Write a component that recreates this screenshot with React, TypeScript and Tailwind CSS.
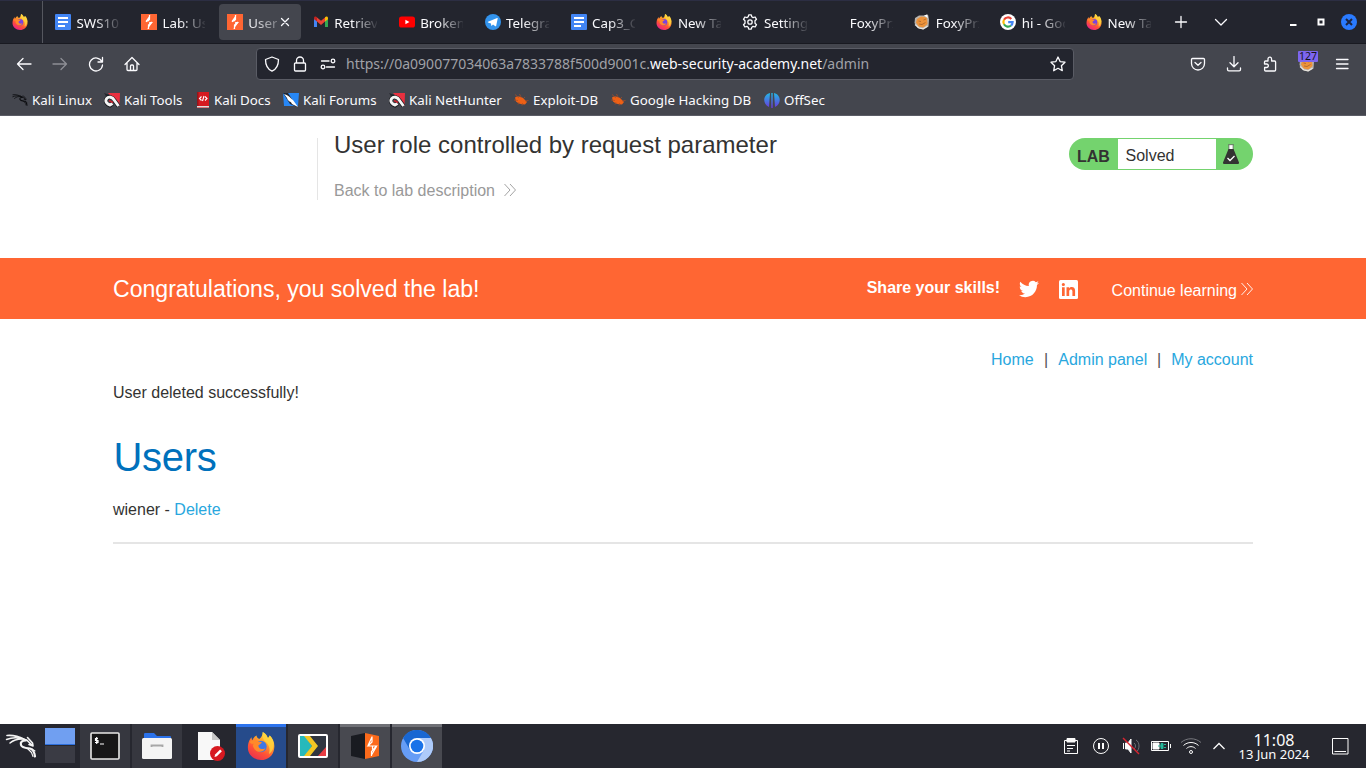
import React from "react";

type IconProps = { className?: string };

const FirefoxLogo = ({ size, id, globe = "#7a42e0", low = "#ea1f8c" }: { size: number; id: string; globe?: string; low?: string }) => (
  <svg width={size} height={size} viewBox="0 0 32 32" className="block shrink-0">
    <defs>
      <linearGradient id={`${id}-a`} x1="0.85" y1="0" x2="0.3" y2="1">
        <stop offset="0" stopColor="#fff44f" />
        <stop offset="0.35" stopColor="#ffa62b" />
        <stop offset="0.7" stopColor="#ff5137" />
        <stop offset="1" stopColor={low} />
      </linearGradient>
    </defs>
    <path d="M18 0c4 2 5 5 6 7l2-3c4 4 6 9 5 15-1 8-7 13-15 13S1 26 1 18c0-6 2-9 4-12l1 4c1-3 3-5 5-6 0 2 1 3 3 4 3-2 4-5 4-8z" fill={`url(#${id}-a)`} />
    <circle cx="16" cy="16.500" r="6.500" fill={globe} />
    <path d="M3 11c4-3 8-2 10 0l4 .5c0 2-3 2.500-4 4 0 4 4 5 8 3-2 5-10 6-13 0-2-3-1-4 0-5-2 0-4 0-5-2.500z" fill="#ff8a2a" />
    <path d="M18 0c4 2 5 5 6 7l2-3c4 4 5 9 4 14-1 4-3 6-5 7 2-6 0-11-4-14-3-3-4-6-3-11z" fill="#ffd53e" opacity="0.8" />
  </svg>
);

const DocIcon = () => (
  <svg width="16" height="16" viewBox="0 0 16 16" className="block">
    <rect width="16" height="16" rx="1" fill="#4285f4" />
    <path d="M3 4h10M3 8h10M3 12h7" stroke="#fff" strokeWidth="1.800" />
  </svg>
);

const BurpIcon = () => (
  <svg width="16" height="16" viewBox="0 0 16 16" className="block">
    <rect width="16" height="16" fill="#ff6633" />
    <path d="M9.300.5 4.500 7.300h3.700v2.200L6.400 15.500 11.800 8H8.200V6z" fill="#fff" />
    <path d="M8.500 1v4.500L5 7.800M7.500 15v-4l3.700-3" stroke="#fff" strokeWidth="1.200" fill="none" />
  </svg>
);

const GmailIcon = () => (
  <svg width="16" height="16" viewBox="0 0 16 16" className="block">
    <path d="M1 4v9h3V7z" fill="#4285f4" />
    <path d="M15 4v9h-3V7z" fill="#34a853" />
    <path d="M4 3.500v4L8 11l4-3.500v-4L8 6.700z" fill="#ea4335" />
    <path d="M1 4.200C1 2 3 2 4 3.200v4.300L1 5.200z" fill="#c5221f" />
    <path d="M15 4.200C15 2 13 2 12 3.200v4.300l3-2.300z" fill="#fbbc04" />
  </svg>
);

const YoutubeIcon = () => (
  <svg width="16" height="16" viewBox="0 0 16 16" className="block">
    <rect y="2.500" width="16" height="11" rx="2.600" fill="#f00" />
    <path d="M6.400 5.700v4.600l4-2.300z" fill="#fff" />
  </svg>
);

const TelegramIcon = () => (
  <svg width="16" height="16" viewBox="0 0 16 16" className="block">
    <circle cx="8" cy="8" r="8" fill="#3293ec" />
    <path d="m3 7.800 9.200-3.900c.5-.1.6.2.5.6l-1.500 7.300c-.1.5-.5.6-.9.4L8 10.500l-1.300 1.200c-.3.2-.5.1-.5-.3l-.2-2L3 8.400c-.4-.2-.3-.4 0-.6z" fill="#fff" />
  </svg>
);

const GearIcon = () => (
  <svg width="16" height="16" viewBox="0 0 16 16" className="block" fill="none" stroke="#fbfbfe" strokeWidth="1.300" strokeLinejoin="round">
    <circle cx="8" cy="8" r="2.200" />
    <path d="m6.700.8-.5 2-1.300.8-2-.6-1.400 2.300L3 6.800v2.400L1.500 10.700 2.900 13l2-.6 1.300.8.5 2h2.600l.5-2 1.300-.8 2 .6 1.400-2.300L13 9.200V6.800l1.500-1.500L13.100 3l-2 .6-1.300-.8-.5-2z" />
  </svg>
);

const FoxyIcon = () => (
  <svg width="16" height="16" viewBox="0 0 16 16" className="block">
    <path d="M1 4 5 1.500h5L14 .5l1 5-.5 7-5 3-6-1.500-3-5z" fill="#b9b4ae" />
    <path d="m3 5 4-2.500 4 .5 2 1 .5 6-4 3.500-5-1-2.500-4z" fill="#ec933b" />
    <path d="M4.500 7 7 7.500M9.500 6l2.500-1M5 10l3 .5 3.500-2" stroke="#b06a2c" strokeWidth=".9" fill="none" />
    <path d="M1 10.500 5 14l4 .8 4.500-2.500" stroke="#e9e5de" strokeWidth="1.200" fill="none" />
    <path d="M10 1.500 13 .5l1 3.500z" fill="#fff" />
  </svg>
);

const GoogleIcon = () => (
  <svg width="16" height="16" viewBox="0 0 16 16" className="block">
    <circle cx="8" cy="8" r="8" fill="#fff" />
    <g fill="none" strokeWidth="2.200">
      <path d="M11.300 4.900A4.600 4.600 0 0 0 4 5.700" stroke="#ea4335" />
      <path d="M4 5.700a4.600 4.600 0 0 0 0 4.600" stroke="#fbbc05" />
      <path d="M4 10.300a4.600 4.600 0 0 0 7 1.200" stroke="#34a853" />
      <path d="M11 11.500a4.600 4.600 0 0 0 1.600-3.300H8.200" stroke="#4285f4" />
    </g>
  </svg>
);

const DragonIcon = ({ size, color }: { size: number; color: string }) => (
  <svg width={size} height={size} viewBox="0 0 32 32" className="block" fill="none" stroke={color} strokeLinecap="round" strokeLinejoin="round">
    <path d="M2 5.500C8 5 13 6 19 9.300" strokeWidth="1.700" />
    <path d="M1.500 9.500C7 7.300 12 7.300 17 8.700M5 13c4-3.500 7-4 12-4" strokeWidth="1.500" />
    <path d="M17 8.500l5 1.700 5 5M22.500 7.500l5 5.500.5 3-4-1.500" strokeWidth="1.600" />
    <path d="M21 10.500c-4 0-6 1.500-5 4.500 1 3 5 3 9 3.500 3 .8 4.500 4 5 8" strokeWidth="2.200" />
    <path d="m23 19 3.500 3.500 1.500 4M27 19l3 2" strokeWidth="1.100" />
  </svg>
);

const ToolsIcon = () => (
  <svg width="16" height="16" viewBox="0 0 16 16" className="block">
    <path d="M4 1h12l-.5 13z" fill="#e9303f" />
    <path d="m0 1 6 2-3 3z" fill="#25272e" />
    <path d="M14.500 14 10.500 8.500C8.500 5 4.500 4 2.600 6.700S3 12.500 6 13.500l2.500-2" stroke="#17181c" strokeWidth="4.200" fill="none" />
    <path d="M14.500 14 10.500 8.500C8.500 5 4.500 4 2.600 6.700S3 12.300 6 13l2.500-1.500" stroke="#f5f5f5" strokeWidth="2.900" fill="none" />
    <path d="m5 8.500 4 2" stroke="#c5202c" strokeWidth="1.800" />
  </svg>
);

const DocsBookIcon = () => (
  <svg width="14" height="16" viewBox="1 0 14 16" className="block">
    <path d="M2 0h12v16H2z" fill="#d51a20" />
    <path d="M2 14h12v1.500H2z" fill="#ddd" />
    <path d="M2 0h1.500v14H2z" fill="#96151a" />
    <path d="m6.500 4.500-2 2 2 2M10 4.500l2 2-2 2M9 4 7.500 9" stroke="#fff" strokeWidth="1.100" fill="none" />
  </svg>
);

const ForumIcon = () => (
  <svg width="16" height="16" viewBox="0 0 16 16" className="block">
    <path d="M0 1h16l-1 13H1z" fill="#2787f5" />
    <path d="M0 1h5l9 14-7-3z" fill="#202631" />
    <path d="M1 2c6 2 6 4 9 6l5 7-6-3c-1-3-4-2-5-6z" fill="#fff" />
  </svg>
);

const BugIcon = () => (
  <svg width="16" height="16" viewBox="0 0 16 16" className="block">
    <path d="M2 5.500c2-1.500 5-1 8 .5l4 4-2 2.500c-4 0-7-1-9-3z" fill="#ee6015" />
    <path d="M2 2.500 6 6M6.500 2 8.500 6M12 5l-2 2M15.500 8.500 12 9M9 13.500l.5-2.500M5 12.500l1-2.500M1 8l4 .5" stroke="#b04e22" strokeWidth=".7" />
  </svg>
);

const OffsecIcon = () => (
  <svg width="16" height="16" viewBox="0 0 16 16" className="block">
    <defs>
      <linearGradient id="offsec" x1="0" y1="0" x2="0" y2="1">
        <stop offset="0" stopColor="#22b8e6" />
        <stop offset="1" stopColor="#6b37dc" />
      </linearGradient>
    </defs>
    <path d="M6 1C-1.500 3-1.500 12 5 15zM10 1c7.500 2 7.500 11 1 14zM7.300 1h1.400v15H7.300z" fill="url(#offsec)" />
  </svg>
);

const tabs: { label: string; icon?: React.ReactNode; active?: boolean }[] = [
  { label: "SWS101", icon: <DocIcon /> },
  { label: "Lab: User", icon: <BurpIcon /> },
  { label: "User role", icon: <BurpIcon />, active: true },
  { label: "Retrieve", icon: <GmailIcon /> },
  { label: "Broken a", icon: <YoutubeIcon /> },
  { label: "Telegram", icon: <TelegramIcon /> },
  { label: "Cap3_Gr", icon: <DocIcon /> },
  { label: "New Tab", icon: <FirefoxLogo size={16} id="nt1" /> },
  { label: "Settings", icon: <GearIcon /> },
  { label: "FoxyPrx" },
  { label: "FoxyPrx", icon: <FoxyIcon /> },
  { label: "hi - Goog", icon: <GoogleIcon /> },
  { label: "New Tab", icon: <FirefoxLogo size={16} id="nt2" /> },
];

const bookmarks = [
  { label: "Kali Linux", w: "w-[92px]", icon: <DragonIcon size={16} color="#0c0d10" /> },
  { label: "Kali Tools", w: "w-[92px]", icon: <ToolsIcon /> },
  { label: "Kali Docs", w: "w-[87px]", icon: <DocsBookIcon /> },
  { label: "Kali Forums", w: "w-[106px]", icon: <ForumIcon /> },
  { label: "Kali NetHunter", w: "w-[124px]", icon: <ToolsIcon /> },
  { label: "Exploit-DB", w: "w-[97px]", icon: <BugIcon /> },
  { label: "Google Hacking DB", w: "w-[154px]", icon: <BugIcon /> },
  { label: "OffSec", w: "w-[80px]", icon: <OffsecIcon /> },
];

const Line = ({ d, className = "" }: { d: string; className?: string }) => (
  <svg width="16" height="16" viewBox="0 0 16 16" fill="none" stroke="#fbfbfe" strokeWidth="1.300" strokeLinecap="round" strokeLinejoin="round" className={`block shrink-0 ${className}`}>
    <path d={d} />
  </svg>
);

const Chevrons = ({ className = "" }: IconProps) => (
  <svg width="12" height="14" viewBox="0 0 12 14" fill="none" stroke="currentColor" strokeWidth="0.900" className={`block shrink-0 ${className}`}>
    <path d="m.5 1 5.500 6-5.500 6M6 1l5.500 6L6 13" />
  </svg>
);

function TabBar() {
  return (
    <div className="flex h-11 items-center border-t border-b border-t-[#2c2e43] border-b-[#191a21] bg-[#23252e]">
      <div className="flex h-full w-[43px] shrink-0 items-center border-r border-[#55575f] pl-3">
        <FirefoxLogo size={16} id="pin" />
      </div>
      <div className="flex pl-0.5">
        {tabs.map((t, i) => (
          <div key={i} className="w-[85.930px] shrink-0 px-0.5">
            <div className={`flex h-9 items-center rounded pl-2 ${t.active ? "bg-[#44464e]" : ""}`}>
              <div className="h-4 w-4 shrink-0">{t.icon}</div>
              <div className={`ml-[5.500px] mt-0.5 overflow-hidden whitespace-nowrap text-[13.330px] leading-5 text-[#fbfbfe] ${t.active ? "w-[28.500px] [mask-image:linear-gradient(to_right,black_5%,rgba(0,0,0,0.300)_100%)]" : "w-[43px] [mask-image:linear-gradient(to_right,black_40%,rgba(0,0,0,0.080)_100%)]"}`}>
                {t.label}
              </div>
              {t.active && <Line d="m4.500 4.500 7 7m0-7-7 7" />}
            </div>
          </div>
        ))}
      </div>
      <Line d="M8 2.500v11M2.500 8h11" className="ml-[11.500px]" />
      <Line d="m2.500 5.500 5.500 5.500 5.500-5.500" className="ml-6" />
      <svg width="72" height="18" viewBox="0 0 72 18" className="ml-auto mr-2 block shrink-0">
        <path d="M4 12h6.500" stroke="#fff" strokeWidth="2" />
        <rect x="32.500" y="6.500" width="5" height="5" fill="none" stroke="#fff" strokeWidth="2" />
        <circle cx="63" cy="9" r="8" fill="#2a7bff" />
        <path d="m60 6 6 6m0-6-6 6" stroke="#1c2540" strokeWidth="2" />
      </svg>
    </div>
  );
}

function NavBar() {
  return (
    <div className="flex h-10 items-center">
      <Line d="M15 8H1.500M7 2.500 1.500 8 7 13.500" className="ml-4" />
      <Line d="M1 8h13.500M9 2.500 14.500 8 9 13.500" className="ml-5 opacity-40" />
      <Line d="M13.800 5.500A6.500 6.500 0 1 0 14.500 9M14.500 1.500v4.500H10" className="ml-5" />
      <Line d="M1 8.500 8 1.500l7 7M3 7v6.500c0 .6.4 1 1 1h8c.6 0 1-.4 1-1V7M6.500 14V10c0-.6.4-1 1-1h1c.6 0 1 .4 1 1v4" className="ml-[19.500px]" />
      <div className="ml-[116.500px] flex h-8 w-[818px] items-center rounded border border-[#5a5c65] bg-[#23252e]">
        <Line d="M8 1 1.500 3.500C1.500 9 3 13 8 15.200 13 13 14.500 9 14.500 3.500z" className="ml-[7px]" />
        <Line d="M4.500 7V4.500a3.500 3.500 0 0 1 7 0V7M3.500 7h9c.6 0 1 .4 1 1v6c0 .6-.4 1-1 1h-9c-.6 0-1-.4-1-1V8c0-.6.4-1 1-1z" className="ml-3" />
        <Line d="M1.500 5h7.500M6.500 11H14.500M13 3.200a1.800 1.800 0 1 1 0 3.600 1.800 1.800 0 0 1 0-3.600zM3 9.200a1.800 1.800 0 1 1 0 3.600 1.800 1.800 0 0 1 0-3.600z" className="ml-3" />
        <div className="ml-[10px] whitespace-nowrap text-sm leading-5 text-[#a0a1a7]">
          https://0a090077034063a7833788f500d9001c.<span className="text-[#fbfbfe]">web-security-academy.net</span>/admin
        </div>
        <Line d="m8 1 2.100 4.600 4.900.6-3.600 3.500.9 5L8 12.300l-4.300 2.400.9-5L1 6.200l4.900-.6z" className="ml-auto mr-[7px]" />
      </div>
      <Line d="M2.500 2.500h11c.6 0 1 .4 1 1v4a6.500 6.500 0 0 1-13 0v-4c0-.6.400-1 1-1zM5 6.500 8 9.300l3-2.800" className="ml-[116px]" />
      <Line d="M8 .5v10M4 6.700l4 4 4-4M1.500 12v1.500c0 .8.600 1.300 1.300 1.300h10.400c.700 0 1.300-.5 1.300-1.300V12" className="ml-[19.500px]" />
      <Line d="M2.500 8V6c0-.6.400-1 1-1H6V3a1.800 1.800 0 0 1 3.600 0v2h3c.600 0 1 .400 1 1v8c0 .600-.400 1-1 1h-9c-.600 0-1-.400-1-1v-2.500h2a1.700 1.700 0 0 0 0-3.500z" className="ml-[20.500px]" />
      <div className="relative ml-[21px] h-4 w-4">
        <FoxyIcon />
        <span className="absolute -top-[5px] -left-px h-[11px] w-5 rounded-[1px] bg-[#7d66ef] text-center text-[10.500px] leading-[11px] text-[#15141a]">127</span>
      </div>
      <Line d="M2.500 3.500h11.500M2.500 8h11.500M2.500 12.500h11.500" className="ml-[19px]" />
    </div>
  );
}

function LabStatus() {
  return (
    <div className="mt-[22px] flex h-8 w-[184px] rounded-full bg-[#74d36e] text-[#333332]">
      <div className="w-[49px] pl-2 pt-[10px] font-bold leading-[18px]">LAB</div>
      <div className="mt-px h-[30px] w-[98px] bg-white pl-[7.500px] pt-2 leading-[18px]">Solved</div>
      <svg width="16" height="20" viewBox="0 0 16 20" className="ml-[7px] mt-1.5 block">
        <path d="M6 1h4v5H6z" fill="#fff" />
        <path d="M5 .7h6M5.900 1v6M10.100 1v6" stroke="#666" strokeWidth=".8" fill="none" />
        <path d="M5.500 5h5L16 18.500c.2.900-.300 1.500-1 1.500H1c-.700 0-1.200-.600-1-1.500z" fill="#333332" />
        <path d="m4.500 14 2.500 2.500 4.500-4.500" stroke="#fff" strokeWidth="1.300" fill="none" />
      </svg>
    </div>
  );
}

function LabPage() {
  return (
    <main className="h-[608px] bg-white font-['Liberation_Sans',sans-serif] text-base text-[#333332]">
      <header className="mx-[113px] flex h-[142px] justify-between">
        <div className="ml-[204px] mt-[22px] h-[62px] border-l border-[#e5e5e5] pl-4">
          <h1 className="-mt-[7px] text-2xl leading-7">User role controlled by request parameter</h1>
          <a className="mt-[22px] flex items-center leading-5 text-[#999]">
            Back to lab description <Chevrons className="-mt-0.5 ml-[9px]" />
          </a>
        </div>
        <LabStatus />
      </header>
      <section className="flex h-[61px] items-center bg-[#ff6633] px-[113px] text-white">
        <h4 className="mt-0.5 text-[23.100px] tracking-[-0.020px]">Congratulations, you solved the lab!</h4>
        <span className="ml-auto -mt-px font-bold">Share your skills!</span>
        <svg width="20" height="20" viewBox="0 0 24 24" className="ml-[18.500px] block" fill="#fff">
          <path d="M23.950 4.570a10 10 0 0 1-2.820.770 4.960 4.960 0 0 0 2.160-2.720c-.950.560-2 .960-3.130 1.180a4.920 4.920 0 0 0-8.380 4.480C7.690 8.100 4.070 6.130 1.640 3.160a4.820 4.820 0 0 0-.670 2.480c0 1.710.870 3.210 2.190 4.100a4.900 4.900 0 0 1-2.230-.620v.060a4.920 4.920 0 0 0 3.950 4.830 5 5 0 0 1-2.210.080 4.940 4.940 0 0 0 4.600 3.420A9.870 9.870 0 0 1 0 19.540a13.990 13.990 0 0 0 7.550 2.210c9.050 0 14-7.500 14-13.980 0-.210 0-.420-.020-.630a9.940 9.940 0 0 0 2.460-2.550z" />
        </svg>
        <svg width="19" height="19" viewBox="0 0 19 19" className="ml-5 mt-px block">
          <rect width="19" height="19" rx="1.500" fill="#fff" />
          <path d="M3 7.300h2.700V16H3zM4.350 2.900a1.600 1.600 0 1 1 0 3.200 1.600 1.600 0 0 1 0-3.200zM7.500 7.300h2.600v1.200c1.300-2.200 6-2.100 6 2V16h-2.700v-4.800c0-2.400-3.200-2.300-3.200 0V16H7.500z" fill="#ff6633" />
        </svg>
        <a className="ml-[34px] mt-[5px] flex items-center">Continue learning<Chevrons className="-mt-1 ml-1" /></a>
      </section>
      <div className="mx-[113px] pt-[31px]">
        <nav className="flex justify-end leading-5 text-[#29a7de]">
          <a>Home</a><span className="w-[24.500px] text-center text-[#555]">|</span>
          <a>Admin panel</a><span className="w-6 text-center text-[#555]">|</span>
          <a>My account</a>
        </nav>
        <p className="mt-[13px] leading-5">User deleted successfully!</p>
        <h1 className="mt-[30px] pl-[0.500px] text-[40px] leading-[48px] tracking-[-0.300px] text-[#0071bc]">Users</h1>
        <p className="mt-[19px] leading-5">wiener - <a className="text-[#29a7de]">Delete</a></p>
        <hr className="mt-[22px] h-0.5 border-0 bg-[#e5e5e5]" />
      </div>
    </main>
  );
}

function Taskbar() {
  return (
    <footer className="flex h-11 items-center bg-[#26272f] text-[#fcfcfc]">
      <div className="ml-[5px]"><DragonIcon size={32} color="#f5f5f5" /></div>
      <div className="-mt-px ml-2 w-[30px]">
        <div className="mb-px h-[17px] border-b border-[#2d6fdc] bg-[#709ff1]" />
        <div className="h-[17px] bg-[#3a3b44]" />
      </div>
      <div className="ml-[5px] flex h-11 w-[50px] items-center justify-center bg-[#36373f]">
        <svg width="30" height="28" viewBox="0 0 30 28" className="block">
          <rect x="1" y="1" width="28" height="26" rx="1" fill="#171717" stroke="#e9e9e6" strokeWidth="1.600" />
          <path d="M8 6.500H5.500v2H8v2H5M6.700 5v7M10 12h4" stroke="#fff" strokeWidth="1.200" fill="none" />
        </svg>
      </div>
      <div className="ml-0.5 flex h-11 w-[50px] items-center justify-center bg-[#36373f]">
        <svg width="30" height="28" viewBox="0 0 30 28" className="block">
          <path d="M2 2c0-1 1-1 1-1h9l3 3h13c1 0 1 1 1 1v10H2z" fill="#2b72ea" />
          <rect x="0" y="6" width="30" height="21" rx="1.500" fill="#f4f4f4" />
          <path d="M9.500 15v-1.500h11V15" stroke="#a7a7a7" strokeWidth="1.800" fill="none" />
        </svg>
      </div>
      <div className="flex h-11 w-[54px] items-center justify-center pl-[3px]">
        <svg width="28" height="30" viewBox="0 0 28 30" className="block">
          <path d="M1 1h14l8 8v20H1z" fill="#f8f8f8" />
          <path d="M15 1v8h8z" fill="#c8c8c8" />
          <circle cx="20.500" cy="22.500" r="7.500" fill="#d71920" />
          <path d="m17.500 26 .6-2.500 5-5 1.800 1.800-5 5z" fill="#fff" />
        </svg>
      </div>
      <div className="flex h-11 w-[50px] items-center justify-center border-t-[3px] border-[#2d74ee] bg-[#264b8b] pb-[3px]">
        <FirefoxLogo size={28} id="task" globe="#3f78e4" low="#e8324e" />
      </div>
      <div className="ml-0.5 flex h-11 w-[50px] items-center justify-center bg-[#36373f]">
        <svg width="30" height="24" viewBox="0 0 30 24" className="block">
          <rect x="1" y="1" width="28" height="22" rx="1" fill="#303641" stroke="#fff" strokeWidth="2" />
          <path d="M2 2h5l7 10-7 10H2z" fill="#26b9bb" />
          <path d="M6 2h6l8 10-8 10H6l8-10z" fill="#f3c624" />
          <path d="M2 8l9 4-6 10H2z" fill="#26b9bb" />
          <path d="m28 13-8 9h8z" fill="#e83e45" />
        </svg>
      </div>
      <div className="ml-0.5 flex h-11 w-[50px] items-center justify-center border-t-[3px] border-[#6f7076] bg-[#484950] pb-[3px]">
        <svg width="30" height="28" viewBox="0 0 30 28" className="block">
          <path d="M1 4 15 1v26L1 24z" fill="#191b21" />
          <path d="m15 1 14 3v20l-14 3z" fill="#fb6a1b" />
          <path d="M22 4.500v5.500l-4 4h4.500v3.500M22 5l-4 8.500M21.500 24v-4.500l5-5.500h-4M21.500 23l5-8.500" stroke="#fff" strokeWidth="1.200" fill="none" />
        </svg>
      </div>
      <div className="ml-0.5 flex h-11 w-[50px] items-center justify-center border-t-[3px] border-[#6f7076] bg-[#484950] pb-[3px]">
        <svg width="32" height="32" viewBox="0 0 32 32" className="block">
          <circle cx="16" cy="16" r="16" fill="#669df6" />
          <path d="M2.100 8A16 16 0 0 1 29.900 8H16L9 20z" fill="#1967d2" />
          <path d="M16 8h13.900A16 16 0 0 1 16 32l7-12z" fill="#aecbfa" />
          <circle cx="16" cy="16" r="8" fill="#fff" />
          <circle cx="16" cy="16" r="6.300" fill="#1a73e8" />
        </svg>
      </div>
      <svg width="170" height="22" viewBox="0 0 170 22" fill="none" stroke="#fcfcfc" className="ml-auto block shrink-0">
        <path d="M4.500 5.500h13v13h-13zM7 10.500h8M7 13.500h6M7 16h3" />
        <path d="M7 3.500h8v3.500H7z" fill="#fcfcfc" />
        <circle cx="41" cy="11" r="7.500" />
        <path d="M39 8v6M43 8v6" strokeWidth="2" />
        <path d="M63.500 8v6" />
        <path d="M65.500 8h2.500l3-4v14l-3-4h-2.500z" fill="#fcfcfc" />
        <path d="M74 8c2 1 2 5 0 6M76 5c4 2 4 10 0 12" stroke="#6d6e74" />
        <path d="m63 3 16 16" stroke="#da2430" strokeWidth="1.400" />
        <path d="M91.500 6.500h17v9h-17zM110.500 9v4" />
        <path d="M93 8h6v6h-6z" fill="#fcfcfc" />
        <path d="M98 11h3M101 8.500h2v5h-2zM104 9.500h2M104 12.500h2" stroke="#25b89a" fill="#25b89a" />
        <path d="M121 7.500c5.500-5 14.500-5 20 0" stroke="#77787e" />
        <path d="M123.500 10.500c4-4 11-4 15 0M126.500 13.500c2.500-2.500 6.500-2.500 9 0" />
        <circle cx="131" cy="17" r="1.500" />
        <path d="m153.500 14 5.500-5.500 5.500 5.500" strokeWidth="1.300" />
      </svg>
      <div className="ml-[6px] w-[76px] text-center">
        <div className="mt-px text-[16px] leading-4">11:08</div>
        <div className="text-[13px] leading-[13px]">13 Jun 2024</div>
      </div>
      <svg width="17" height="17" viewBox="0 0 17 17" fill="none" stroke="#fcfcfc" className="ml-5 mr-[17px] block shrink-0">
        <path d="M.5.5h15.500v15.500H.5zM2.500 13.500h11.500" />
      </svg>
    </footer>
  );
}

export default function App() {
  return (
    <div className="h-[768px] w-[1366px] overflow-hidden font-['Noto_Sans',sans-serif]">
      <div className="h-[116px] border-b border-[#5b5d66] bg-[#44464e]">
        <TabBar />
        <NavBar />
        <div className="flex h-8 items-center pl-3 text-[13.330px] text-[#fbfbfe]">
          {bookmarks.map((b) => (
            <div key={b.label} className={`flex shrink-0 items-center whitespace-nowrap ${b.w}`}>
              {b.icon}
              <span className="ml-1 leading-5">{b.label}</span>
            </div>
          ))}
        </div>
      </div>
      <LabPage />
      <Taskbar />
    </div>
  );
}
